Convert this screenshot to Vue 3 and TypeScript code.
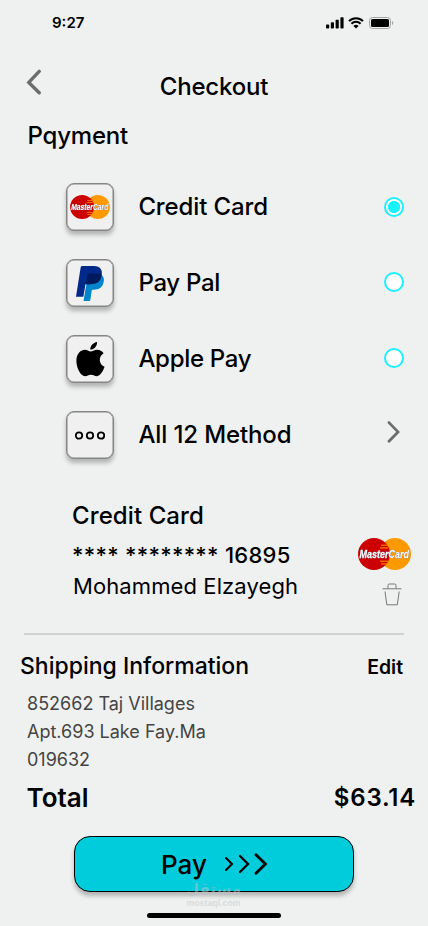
<script setup lang="ts">
import { defineComponent, h, ref } from 'vue'

type MethodId = 'card' | 'paypal' | 'apple' | 'more'

interface Method {
  id: MethodId
  label: string
}

const methods: Method[] = [
  { id: 'card', label: 'Credit Card' },
  { id: 'paypal', label: 'Pay Pal' },
  { id: 'apple', label: 'Apple Pay' },
  { id: 'more', label: 'All 12 Method' },
]
const selected = ref<MethodId>('card')
const address: string[] = ['852662 Taj Villages', 'Apt.693 Lake Fay.Ma', '019632']

function choose(id: MethodId): void {
  if (id !== 'more') selected.value = id
}

const brandText = {
  x: 1.5,
  textLength: 49.5,
  lengthAdjust: 'spacingAndGlyphs',
  'font-family': '"Liberation Sans", Arial, sans-serif',
  'font-size': 11.8,
  'font-weight': 700,
  'font-style': 'italic',
}

const MasterCard = defineComponent({
  render: () =>
    h('svg', { viewBox: '0 0 53 32', overflow: 'visible' }, [
      h('circle', { cx: 37, cy: 16, r: 16, fill: '#ff9900' }),
      h('circle', { cx: 16, cy: 16, r: 16, fill: '#cc0000' }),
      h('path', {
        d: 'M23 7.2h7M22 9.9h8M22 23.2h8M23 25.9h6',
        stroke: '#ff9900',
        'stroke-width': 1,
      }),
      h(
        'text',
        {
          ...brandText,
          y: 20.4,
          fill: '#fff',
          stroke: '#fff',
          'stroke-width': 0.3,
          style: { filter: 'drop-shadow(0.8px 0.8px 0 #2b2244)' },
        },
        'MasterCard',
      ),
    ]),
})
</script>

<template>
  <main class="screen">
    <div class="status">
      <span class="time">9:27</span>
      <div class="signals">
        <svg class="bars" viewBox="0 0 18 12">
          <rect x="0" y="7.5" width="3.2" height="4" rx=".8" />
          <rect x="4.8" y="5.3" width="3.2" height="6.2" rx=".8" />
          <rect x="9.6" y="2.8" width="3.2" height="8.7" rx=".8" />
          <rect x="14.4" y=".3" width="3.2" height="11.2" rx=".8" />
        </svg>
        <svg class="wifi" viewBox="0 0 16 12">
          <path d="M1 4.1a10 10 0 0 1 14 0M3.4 6.7a6.6 6.6 0 0 1 9.2 0" fill="none" stroke="#000" stroke-width="2" />
          <path d="M5.4 9a3.8 3.8 0 0 1 5.2 0L8 11.6z" />
        </svg>
        <svg class="battery" viewBox="0 0 25 12">
          <rect x=".5" y=".5" width="21" height="11" rx="3" fill="none" stroke="#a5a6a6" />
          <rect x="2" y="2" width="18" height="8" rx="1.5" />
          <path d="M23 4v4q1.3-.6 1.3-2T23 4" fill="#a5a6a6" />
        </svg>
      </div>
    </div>

    <header class="header">
      <svg class="back" viewBox="0 0 16 26"><path d="M13.2 2.4 2.8 13.4l10.4 10.4" /></svg>
      <h1>Checkout</h1>
    </header>

    <h2 class="section">Pqyment</h2>

    <ul class="methods">
      <li v-for="m in methods" :key="m.id" @click="choose(m.id)">
        <span class="tile">
          <MasterCard v-if="m.id === 'card'" class="tile-card" />
          <svg v-else-if="m.id === 'paypal'" class="logo" viewBox="0 0 30 36">
            <path fill="#0085cc" d="M26 9c3.2 2.2 3.4 5.5 2.3 8.8-1.6 5-5.3 6.6-10 6.6h-1.9L14.8 35q-.2 1-1.2 1H7.8l2-12L13 9z" />
            <path fill="#00298a" d="M6.5 0h12.2c6.2 0 9.2 4 7.7 10.1-1.5 6.2-5.6 8.6-12 8.6H9.8L7.6 31.8H0L4.8 1.4Q5.1 0 6.5 0" />
            <path fill="#001a5c" d="M13 7.6h11.5q1.1.2 1.9.8-.1 10.3-12 10.3h-4L12 8.7q.2-1.1 1-1.1" />
          </svg>
          <svg v-else-if="m.id === 'apple'" class="logo" viewBox="0 0 29 36">
            <path d="M14.5 9.8c1.8 0 3.8-1.8 6.9-1.8 2.6 0 5.1 1.3 6.6 3.5-5.9 3.4-4.8 11.7 1 14-1.5 4.2-4.5 9.6-8 9.6-2.3 0-3.1-1.4-6-1.4s-3.9 1.4-6 1.4C4.2 35.1 0 26.4 0 19.5 0 12 4.6 8 9 8c2.3 0 4.2 1.8 5.5 1.8M14.2 7.8c-.1-3.8 3.2-7.2 7-7.8.5 4.1-3.1 8-7 7.8" />
          </svg>
          <svg v-else class="dots" viewBox="0 0 30 9">
            <circle cx="4" cy="4.5" r="3.2" />
            <circle cx="15" cy="4.5" r="3.2" />
            <circle cx="26" cy="4.5" r="3.2" />
          </svg>
        </span>
        <span class="label" :class="{ tight: m.id === 'paypal' || m.id === 'apple' }">{{ m.label }}</span>
        <svg v-if="m.id === 'more'" class="next" viewBox="0 0 14 22"><path d="M2 1.6 11 10.9 2 20.2" /></svg>
        <span v-else class="radio" :class="{ on: selected === m.id }"></span>
      </li>
    </ul>

    <section class="saved">
      <div class="details">
        <h2>Credit Card</h2>
        <p class="number">**** ******** 16895</p>
        <p class="owner">Mohammed Elzayegh</p>
      </div>
      <div class="side">
        <MasterCard class="brand" />
        <svg class="trash" viewBox="0 0 20 23">
          <path d="M.5 5.8h19M6 5.5V2.3Q6 1 7.3 1h5.4Q14 1 14 2.3v3.2M3 8.5l1.8 13.3h10.5L17.2 8.5" />
        </svg>
      </div>
    </section>

    <section class="shipping">
      <div class="ship-head">
        <h2>Shipping Information</h2>
        <span class="edit">Edit</span>
      </div>
      <p v-for="line in address" :key="line">{{ line }}</p>
    </section>

    <div class="total">
      <span class="total-label">Total</span>
      <span class="amount">$63.14</span>
    </div>

    <button class="pay">
      <span class="pay-label">Pay</span>
      <svg viewBox="0 0 44 22">
        <path d="M2 5l6 6-6 6" stroke-width="2" />
        <path d="M16 3l8 8-8 8" stroke-width="2.3" />
        <path d="M32 1.8l9.4 9.2-9.4 9.2" stroke-width="2.8" />
      </svg>
    </button>

    <div class="home"></div>
    <div class="watermark"><span class="ar">مستقل</span><span class="domain">mostaql.com</span></div>
  </main>
</template>

<style>
body {
  background: #eff1f1;
}
</style>

<style scoped>
.screen {
  position: relative;
  width: 428px;
  height: 926px;
  overflow: hidden;
  box-sizing: border-box;
  background: #eff1f1;
  color: #000;
  font-family: Inter, 'Liberation Sans', sans-serif;
  font-weight: 500;
}
svg {
  display: block;
}
h1,
h2,
p,
ul {
  margin: 0;
  padding: 0;
}
h1,
h2 {
  font-size: 24px;
  font-weight: 500;
  line-height: 30px;
}
.status {
  display: flex;
  justify-content: space-between;
  align-items: center;
  height: 46px;
  padding: 0 34px 0 52px;
}
.time {
  font-size: 15px;
  font-weight: 600;
  line-height: 18px;
}
.signals {
  display: flex;
  align-items: center;
}
.bars {
  width: 18px;
  height: 12px;
  margin-right: 4px;
}
.wifi {
  width: 16px;
  height: 12px;
  margin-right: 5px;
}
.battery {
  width: 25px;
  height: 12px;
}
.header {
  display: grid;
  grid-template-columns: 1fr auto 1fr;
  align-items: start;
  padding: 23px 26px 0;
  height: 52px;
}
.back {
  width: 16px;
  height: 26px;
}
.back path,
.next path {
  fill: none;
  stroke: #6c6c6c;
  stroke-width: 3.4;
  stroke-linecap: round;
}
.header h1 {
  padding-top: 3px;
  letter-spacing: -0.2px;
}
.section {
  padding-left: 27.5px;
  letter-spacing: -0.2px;
}
.methods {
  list-style: none;
  padding: 32px 24px 0 66px;
}
.methods li {
  display: flex;
  align-items: center;
  height: 48px;
  margin-bottom: 28px;
}
.tile {
  display: flex;
  align-items: center;
  justify-content: center;
  width: 48px;
  height: 48px;
  box-sizing: border-box;
  border: 1px solid #858585;
  border-radius: 8px;
  background: #f0f0f0;
  box-shadow:
    inset 0 0 0 0.5px #858585,
    0 4px 4px rgba(0, 0, 0, 0.25);
}
.tile-card {
  width: 40px;
  height: 24px;
}
.logo {
  width: 29px;
  height: 35px;
}
.dots {
  width: 30px;
  height: 9px;
}
.dots circle {
  fill: none;
  stroke: #000;
  stroke-width: 1.8;
}
.label {
  flex: 1;
  padding-left: 24.4px;
  font-size: 24px;
  line-height: 30px;
  letter-spacing: -0.12px;
}
.label.tight {
  letter-spacing: -0.3px;
}
.radio {
  box-sizing: border-box;
  width: 20px;
  height: 20px;
  margin-bottom: 2px;
  border: 2px solid #1af1ff;
  border-radius: 50%;
  background: #fff;
}
.radio.on {
  margin-bottom: 0;
  background: radial-gradient(circle, #1af1ff 5.7px, #fff 6.3px);
}
.next {
  width: 14px;
  height: 22px;
  margin: 0 3px 7px 0;
}
.next path {
  stroke-width: 2.8;
}
.saved {
  display: flex;
  justify-content: space-between;
  height: 148px;
  box-sizing: border-box;
  margin: 0 24px;
  padding: 14px 0 0 48px;
  border-bottom: 2px solid #d0d2d2;
}
.details h2 {
  letter-spacing: 0.1px;
}
.number {
  padding-top: 10px;
  font-size: 22px;
  line-height: 28px;
  letter-spacing: 0.27px;
}
.owner {
  padding: 3px 0 0 1px;
  font-size: 22px;
  font-weight: 400;
  line-height: 28px;
  letter-spacing: 0.1px;
}
.side {
  display: flex;
  flex-direction: column;
  align-items: center;
  margin-right: -7px;
  padding-top: 37px;
}
.brand {
  width: 53px;
  height: 32px;
}
.trash {
  width: 20px;
  height: 23px;
  margin: 13px 0 0 14px;
}
.trash path {
  fill: none;
  stroke: #777;
  stroke-width: 1;
}
.shipping {
  padding: 16px 25px 0 20px;
}
.ship-head {
  display: flex;
  justify-content: space-between;
  align-items: baseline;
  padding-bottom: 9px;
}
.ship-head h2 {
  font-size: 23px;
}
.edit {
  font-size: 19.4px;
  font-weight: 600;
}
.shipping p {
  padding-left: 7px;
  color: #444;
  font-size: 18px;
  font-weight: 400;
  line-height: 28px;
}
.total {
  display: flex;
  justify-content: space-between;
  align-items: center;
  height: 46px;
  padding: 0 12px 2px 26.5px;
}
.total-label {
  font-size: 26px;
  font-weight: 600;
}
.amount {
  font-size: 24px;
  font-weight: 600;
  letter-spacing: 0.8px;
}
.pay {
  display: flex;
  align-items: center;
  width: 280px;
  height: 56px;
  margin: 14px 0 0 74px;
  padding: 0 0 0 86px;
  box-sizing: border-box;
  border: 1px solid #000;
  border-radius: 16px;
  background: #00ccdb;
  box-shadow: 0 4px 4px rgba(0, 0, 0, 0.25);
  color: #000;
  font: 500 26px/32px Inter, sans-serif;
}
.pay-label {
  padding-top: 2px;
}
.pay svg {
  width: 44px;
  height: 22px;
  margin-left: 17px;
}
.pay path {
  fill: none;
  stroke: #000;
  stroke-linecap: round;
}
.home {
  width: 134px;
  height: 5px;
  margin: 21px auto 0;
  border-radius: 3px;
  background: #000;
}
.watermark {
  position: absolute;
  left: 187px;
  top: 880px;
  width: 53px;
  display: flex;
  flex-direction: column;
  align-items: center;
  color: rgba(190, 196, 197, 0.5);
  white-space: nowrap;
}
.ar {
  height: 18px;
  font: 700 15px/18px 'DejaVu Sans', sans-serif;
}
.domain {
  font: 700 8.8px/10px 'Liberation Sans', sans-serif;
}
</style>
